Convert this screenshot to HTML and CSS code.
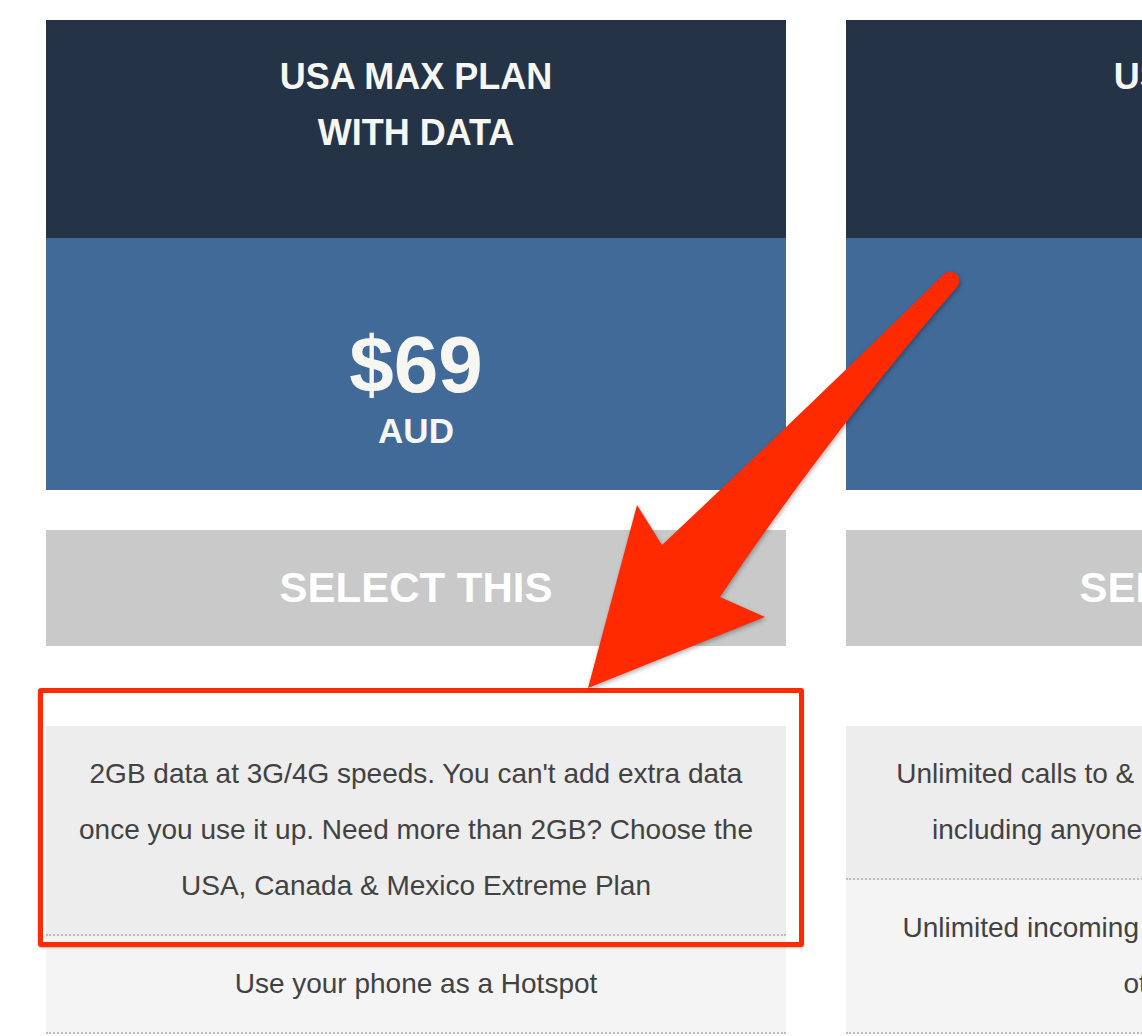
FILE: index.html
```html
<!DOCTYPE html>
<html lang="en">
<head>
<meta charset="utf-8">
<title>Plans</title>
<link rel="stylesheet" href="styles.css">
</head>
<body>
<div class="page">
  <div class="plans">
    <div class="plan">
      <div class="plan-head">USA MAX PLAN<br>WITH DATA</div>
      <div class="plan-price">
        <div class="amount">$69</div>
        <div class="currency">AUD</div>
      </div>
      <div class="select">SELECT THIS</div>
      <ul class="features">
        <li class="feature odd">2GB data at 3G/4G speeds. You can't add extra data once you use it up. Need more than 2GB? Choose the USA, Canada &amp; Mexico Extreme Plan</li>
        <li class="feature even">Use your phone as a Hotspot</li>
      </ul>
    </div>
    <div class="plan">
      <div class="plan-head">USA CALLS</div>
      <div class="plan-price">
        <div class="amount">$49</div>
        <div class="currency">AUD</div>
      </div>
      <div class="select">SELECT THIS</div>
      <ul class="features">
        <li class="feature odd">Unlimited calls to &amp; from USA, Canada and Mexico, including anyone with a USA landline number.</li>
        <li class="feature even">Unlimited incoming calls &amp; texts from Australia and other countries</li>
      </ul>
    </div>
  </div>
  <div class="highlight"></div>
  <svg class="arrow" width="1142" height="1036" viewBox="0 0 1142 1036" aria-hidden="true">
    <path d="M 944 274 Q 821 395 662 545 L 637 505 L 588 688 L 765 617 L 720 597 Q 825 440 957 287 A 9.2 9.2 0 0 0 944 274 Z" fill="#ff2a00"/>
  </svg>
</div>
</body>
</html>
```

FILE: styles.css
```css
html, body {
  margin: 0;
  padding: 0;
  width: 1142px;
  height: 1036px;
  overflow: hidden;
  background: #ffffff;
}

.page {
  position: relative;
  width: 1142px;
  height: 1036px;
  overflow: hidden;
  font-family: "Liberation Sans", Arial, Helvetica, sans-serif;
}

.plans {
  display: flex;
  gap: 60px;
  padding: 20px 0 0 46px;
}

.plan {
  flex: 0 0 740px;
  width: 740px;
}

.plan-head {
  box-sizing: border-box;
  height: 218px;
  padding-top: 29px;
  background: #243346;
  color: #f7f7f2;
  font-weight: bold;
  font-size: 36px;
  line-height: 56px;
  text-align: center;
}

.plan-price {
  box-sizing: border-box;
  height: 252px;
  padding-top: 87px;
  background: #416a99;
  color: #f7f7f2;
  font-weight: bold;
  text-align: center;
}

.amount {
  font-size: 80px;
  line-height: 80px;
}

.currency {
  margin-top: 8px;
  font-size: 35px;
  line-height: 35px;
}

.select {
  margin-top: 40px;
  height: 116px;
  line-height: 116px;
  background: #c9c9c9;
  color: #ffffff;
  font-weight: bold;
  font-size: 42px;
  text-align: center;
}

.features {
  list-style: none;
  margin: 80px 0 0;
  padding: 0;
}

.feature {
  padding: 20px 25px;
  font-size: 28px;
  line-height: 56px;
  color: #424242;
  text-align: center;
  border-bottom: 2px dotted #bdbdbd;
}

.feature.odd {
  background: #ededed;
}

.feature.even {
  background: #f4f4f4;
}

.highlight {
  position: absolute;
  left: 38px;
  top: 688px;
  width: 766px;
  height: 259px;
  box-sizing: border-box;
  border: 5px solid #ff2a00;
  border-radius: 3px;
  box-shadow: 0 1px 2px rgba(0, 0, 0, 0.25);
}

.arrow {
  position: absolute;
  left: 0;
  top: 0;
  pointer-events: none;
  filter: drop-shadow(1px 2px 2px rgba(0, 0, 0, 0.3));
}
```
